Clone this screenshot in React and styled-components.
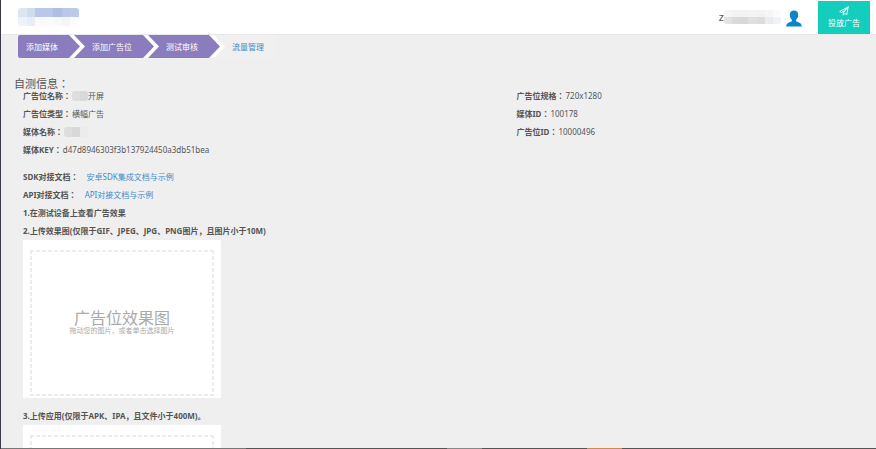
import React from 'react'
import styled, { createGlobalStyle } from 'styled-components'

const steps = [
  { text: '添加媒体', done: true },
  { text: '添加广告位', done: true },
  { text: '测试审核', done: true },
  { text: '流量管理', done: false },
]

const logoCells = [
  '#dde4f2', '#d0dbf0', '#b9c8e8', '#b9c8e8', '#adbfe5', '#b9c8e8', '#bccaea',
  '#eef2fa', '#e8eef8', '#f7f9fd', '#f9fbfe', '#f6f9fd', '#f3f7fb', '#fafcfe',
]
const userCells = [
  '#f6f6f6', '#f3f3f3', '#f3f3f3', '#f4f4f4', '#f3f3f3', '#f6f6f6', '#fafbfc',
  '#e2e2e2', '#dadada', '#d8d8d8', '#e0e0e0', '#dcdcdc', '#ececec', '#eff3f8',
]

const Mosaic = ({ cells, columns, width, height }) => (
  <MosaicGrid $columns={columns} $width={width} $height={height} aria-hidden='true'>
    {cells.map((color, i) => (
      <MosaicCell key={i} $color={color} />
    ))}
  </MosaicGrid>
)

const App = () => {
  return (
    <Page>
      <GlobalStyle />
      <Header>
        <Mosaic cells={logoCells} columns={7} width={61} height={9} />
        <Account>
          <UserName>z</UserName>
          <Mosaic cells={userCells} columns={7} width={57} height={7} />
          <UserIcon viewBox='0 0 16 16' aria-hidden='true'>
            <path d='M8 0C5.200 0 3.700 1.800 3.800 4.400c.1 2.300 1 3.900 2.200 5v1.200C5.600 11.700.4 11.600.2 16h15.600c-.2-4.400-5.400-4.300-5.800-5.400V9.400c1.200-1.100 2.100-2.700 2.200-5C12.300 1.800 10.800 0 8 0z' />
          </UserIcon>
          <PublishButton type='button'>
            <PlaneIcon viewBox='0 0 20 20' aria-hidden='true'>
              <path d='M18.500 1.500L1.500 11l4.500 2 12.500-11.500L8.500 14v4.500l2.800-3.500 4.200 2z' />
            </PlaneIcon>
            投放广告
          </PublishButton>
        </Account>
      </Header>
      <Main>
        <Steps>
          {steps.map((step) => (
            <Step key={step.text} $done={step.done}>
              {step.done ? step.text : <StepLink href='#traffic'>{step.text}</StepLink>}
            </Step>
          ))}
        </Steps>
        <Title>自测信息：</Title>
        <InfoGrid>
          <InfoList>
            <InfoRow>
              <dt>广告位名称：</dt>
              <dd>
                <Mosaic cells={['#dedede', '#d9d9d9']} columns={2} width={16} height={10} />
                开屏
              </dd>
            </InfoRow>
            <InfoRow>
              <dt>广告位类型：</dt>
              <dd>横幅广告</dd>
            </InfoRow>
            <InfoRow>
              <dt>媒体名称：</dt>
              <dd>
                <Mosaic cells={['#dddddd', '#d8d8d8', '#ebecee']} columns={3} width={24} height={10} />
              </dd>
            </InfoRow>
            <InfoRow>
              <dt>媒体KEY：</dt>
              <dd>d47d8946303f3b137924450a3db51bea</dd>
            </InfoRow>
          </InfoList>
          <InfoList>
            <InfoRow>
              <dt>广告位规格：</dt>
              <dd>720x1280</dd>
            </InfoRow>
            <InfoRow>
              <dt>媒体ID：</dt>
              <dd>100178</dd>
            </InfoRow>
            <InfoRow>
              <dt>广告位ID：</dt>
              <dd>10000496</dd>
            </InfoRow>
          </InfoList>
        </InfoGrid>
        <Section>
          <DocRow>
            SDK对接文档：<DocLink href='#sdk'>安卓SDK集成文档与示例</DocLink>
          </DocRow>
          <DocRow>
            API对接文档：<DocLink href='#api'>API对接文档与示例</DocLink>
          </DocRow>
          <Heading>1.在测试设备上查看广告效果</Heading>
          <Heading id='upload-image'>2.上传效果图(仅限于GIF、JPEG、JPG、PNG图片，且图片小于10M)</Heading>
          <Upload>
            <DropZone>
              <FileInput type='file' accept='image/*' aria-labelledby='upload-image' />
              <DropTitle>广告位效果图</DropTitle>
              <DropHint>拖动您的图片，或者单击选择图片</DropHint>
            </DropZone>
          </Upload>
          <Heading id='upload-app'>3.上传应用(仅限于APK、IPA，且文件小于400M)。</Heading>
          <Upload>
            <DropZone>
              <FileInput type='file' accept='.apk,.ipa' aria-labelledby='upload-app' />
            </DropZone>
          </Upload>
        </Section>
      </Main>
      <BottomEdge />
    </Page>
  )
}

export default App

const GlobalStyle = createGlobalStyle`
  * {
    box-sizing: border-box;
  }
  body {
    margin: 0;
    color: #555;
    background-color: #efefef;
    font-family: 'Noto Sans', 'Noto Sans CJK SC', sans-serif;
    font-size: 8px;
    line-height: 18px;
  }
  a {
    color: #428bca;
    text-decoration: none;
  }
`
// the JP face centres the full-width colon
const labelFont = "'Noto Sans', 'Noto Sans CJK JP', sans-serif"

const Page = styled.div`
  height: 100vh;
  display: flex;
  flex-direction: column;
  border-left: 1px solid #3a3a48;
  overflow: hidden;
`
const Header = styled.header`
  flex-shrink: 0;
  display: flex;
  align-items: center;
  justify-content: space-between;
  height: 35px;
  padding: 0 6px 0 17px;
  background-color: #fff;
  border-bottom: 1px solid #e8e8e8;
`
const MosaicGrid = styled.span`
  display: inline-grid;
  grid-template-columns: repeat(${(props) => props.$columns}, 1fr);
  grid-auto-rows: ${(props) => props.$height}px;
  width: ${(props) => props.$width}px;
  border-radius: 3px;
  overflow: hidden;
`
const MosaicCell = styled.span`
  background-color: ${(props) => props.$color};
`
const Account = styled.div`
  display: flex;
  align-items: center;
`
const UserName = styled.span`
  font-size: 11px;
`
const UserIcon = styled.svg`
  width: 16px;
  height: 17px;
  margin: 2px 16px 0 5px;
  fill: #0b86c8;
`
const PublishButton = styled.button`
  display: flex;
  flex-direction: column;
  align-items: center;
  justify-content: center;
  width: 52px;
  height: 33px;
  padding: 2px 0 0;
  border: 0;
  color: #fff;
  background-color: #13cebd;
  font: inherit;
  line-height: 14px;
`
const PlaneIcon = styled.svg`
  width: 10px;
  height: 10px;
  fill: none;
  stroke: #fff;
  stroke-width: 1.8;
  stroke-linejoin: round;
`
const Main = styled.main`
  flex: 1;
  min-height: 0;
  overflow: hidden;
`
const Steps = styled.ol`
  display: flex;
  width: fit-content;
  height: 23px;
  margin: 0 0 17px 17px;
  padding: 0;
  list-style: none;
  background-color: #fff;
  border-radius: 2px;
  overflow: hidden;
`
const Step = styled.li`
  padding: 0 22px 0 18px;
  line-height: 24px;
  color: #fff;
  background-color: ${(props) => (props.$done ? '#8b7dbd' : '#f0f0f0')};
  clip-path: polygon(0 0, calc(100% - 11px) 0, 100% 50%, calc(100% - 11px) 100%, 0 100%, 11px 50%);
  & + & {
    margin-left: -6px;
  }
  &:first-child {
    padding-left: 8px;
    clip-path: polygon(0 0, calc(100% - 11px) 0, 100% 50%, calc(100% - 11px) 100%, 0 100%);
  }
  &:last-child {
    padding-right: 12px;
    clip-path: polygon(0 0, 100% 0, 100% 100%, 0 100%, 11px 50%);
  }
`
const StepLink = styled.a`
  display: block;
`
const Title = styled.h1`
  margin: 0 0 0 13px;
  font-family: ${labelFont};
  font-size: 11px;
  font-weight: 400;
  line-height: 18px;
`
const InfoGrid = styled.div`
  display: grid;
  grid-template-columns: 1fr 1fr;
  column-gap: 134px;
  margin: -6px 0 9px;
  padding-left: 22px;
`
const InfoList = styled.dl`
  margin: 0;
`
const InfoRow = styled.div`
  display: flex;
  height: 18px;
  dt {
    font-family: ${labelFont};
    font-weight: 700;
  }
  dd {
    display: flex;
    align-items: center;
    margin: 0 0 0 1px;
  }
`
const Section = styled.section`
  padding-left: 22px;
`
const DocRow = styled.p`
  margin: 0;
  font-family: ${labelFont};
  font-weight: 700;
`
const DocLink = styled.a`
  margin-left: 8px;
  font-weight: 400;
`
const Heading = styled.h2`
  margin: 0;
  font-size: 8px;
  font-weight: 700;
`
const Upload = styled.div`
  width: 198px;
  margin-bottom: 9px;
  padding: 10px 7px 2px;
  background-color: #fff;
`
const DropZone = styled.label`
  display: flex;
  flex-direction: column;
  align-items: center;
  justify-content: center;
  height: 146px;
  color: #aaa;
  background:
    repeating-linear-gradient(to right, #e9eeec 0 4px, transparent 4px 6px) top / 100% 2px no-repeat,
    repeating-linear-gradient(to right, #e9eeec 0 4px, transparent 4px 6px) bottom / 100% 2px no-repeat,
    repeating-linear-gradient(to bottom, #e9eeec 0 4px, transparent 4px 6px) left / 2px 100% no-repeat,
    repeating-linear-gradient(to bottom, #e9eeec 0 4px, transparent 4px 6px) right / 2px 100% no-repeat;
`
const FileInput = styled.input`
  position: absolute;
  width: 1px;
  height: 1px;
  opacity: 0;
`
const DropTitle = styled.span`
  font-size: 16px;
  line-height: 16px;
`
const DropHint = styled.span`
  font-size: 7px;
  line-height: 10px;
`
const BottomEdge = styled.div`
  flex-shrink: 0;
  height: 1px;
  background: linear-gradient(
    to right,
    #777 28%,
    #555 28% 51%,
    #888 51% 55%,
    #555 55% 67%,
    #d08a4a 67% 71%,
    #555 71%
  );
`
